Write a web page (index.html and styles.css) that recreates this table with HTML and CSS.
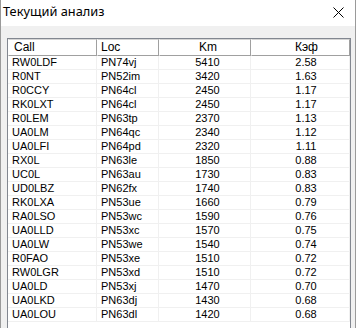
FILE: index.html
```html
<!DOCTYPE html>
<html>
<head>
<meta charset="utf-8">
<link rel="stylesheet" href="styles.css">
</head>
<body>
<div class="window">
  <div class="titlebar">
    <span class="title">Текущий анализ</span>
    <svg class="close" width="11" height="11" viewBox="0 0 11 11"><path d="M0.5 0.5 L10.5 10.5 M10.5 0.5 L0.5 10.5" stroke="#000" stroke-width="1" fill="none"/></svg>
  </div>
  <div class="content">
    <div class="listview">
      <div class="grid">
        <div class="hd c1">Call</div><div class="hd c2">Loc</div><div class="hd c3">Km</div><div class="hd c4">Кэф</div>
        <div class="c1">RW0LDF</div><div class="c2">PN74vj</div><div class="c3">5410</div><div class="c4">2.58</div>
        <div class="c1">R0NT</div><div class="c2">PN52im</div><div class="c3">3420</div><div class="c4">1.63</div>
        <div class="c1">R0CCY</div><div class="c2">PN64cl</div><div class="c3">2450</div><div class="c4">1.17</div>
        <div class="c1">RK0LXT</div><div class="c2">PN64cl</div><div class="c3">2450</div><div class="c4">1.17</div>
        <div class="c1">R0LEM</div><div class="c2">PN63tp</div><div class="c3">2370</div><div class="c4">1.13</div>
        <div class="c1">UA0LM</div><div class="c2">PN64qc</div><div class="c3">2340</div><div class="c4">1.12</div>
        <div class="c1">UA0LFI</div><div class="c2">PN64pd</div><div class="c3">2320</div><div class="c4">1.11</div>
        <div class="c1">RX0L</div><div class="c2">PN63le</div><div class="c3">1850</div><div class="c4">0.88</div>
        <div class="c1">UC0L</div><div class="c2">PN63au</div><div class="c3">1730</div><div class="c4">0.83</div>
        <div class="c1">UD0LBZ</div><div class="c2">PN62fx</div><div class="c3">1740</div><div class="c4">0.83</div>
        <div class="c1">RK0LXA</div><div class="c2">PN53ue</div><div class="c3">1660</div><div class="c4">0.79</div>
        <div class="c1">RA0LSO</div><div class="c2">PN53wc</div><div class="c3">1590</div><div class="c4">0.76</div>
        <div class="c1">UA0LLD</div><div class="c2">PN53xc</div><div class="c3">1570</div><div class="c4">0.75</div>
        <div class="c1">UA0LW</div><div class="c2">PN53we</div><div class="c3">1540</div><div class="c4">0.74</div>
        <div class="c1">R0FAO</div><div class="c2">PN53xe</div><div class="c3">1510</div><div class="c4">0.72</div>
        <div class="c1">RW0LGR</div><div class="c2">PN53xd</div><div class="c3">1510</div><div class="c4">0.72</div>
        <div class="c1">UA0LD</div><div class="c2">PN53xj</div><div class="c3">1470</div><div class="c4">0.70</div>
        <div class="c1">UA0LKD</div><div class="c2">PN63dj</div><div class="c3">1430</div><div class="c4">0.68</div>
        <div class="c1">UA0LOU</div><div class="c2">PN63dl</div><div class="c3">1420</div><div class="c4">0.68</div>
      </div>
    </div>
  </div>
</div>
</body>
</html>
```
FILE: styles.css
```css
html, body {
  margin: 0;
  padding: 0;
  background: #f0f0f0;
  overflow: hidden;
}
.window {
  width: 356px;
  height: 328px;
  box-sizing: border-box;
  border-left: 1px solid #9a9a9a;
  border-right: 1px solid #9a9a9a;
  background: #f0f0f0;
  overflow: hidden;
}
.titlebar {
  height: 26px;
  background: #fff;
  display: flex;
  align-items: center;
  justify-content: space-between;
  padding: 0 11px 0 2px;
  box-sizing: border-box;
}
.title {
  font-family: "Noto Sans", "Open Sans", sans-serif;
  font-size: 12.8px;
  color: #000;
  margin-top: -4px;
}
.close {
  margin-top: -1px;
}
.content {
  padding: 12px 3px 0 6px;
}
.listview {
  width: 344px;
  height: 300px;
  box-sizing: border-box;
  border: 1px solid #828790;
  background: #fff;
  overflow: hidden;
}
.grid {
  display: grid;
  grid-template-columns: 89px 62px 92px 99px;
  font-family: "Liberation Sans", Arial, sans-serif;
  font-size: 11px;
  color: #000;
}
.grid > div {
  height: 14px;
  line-height: 13px;
  box-sizing: border-box;
  border-bottom: 1px solid #f0f0f0;
  border-right: 1px solid #f0f0f0;
  white-space: nowrap;
}
.grid > .hd {
  height: 17px;
  line-height: 15px;
  border-top: 1px solid #d5d5d5;
  border-bottom: 1px solid #a0a0a0;
  border-right: 1px solid #a0a0a0;
  border-left: 1px solid #ffffff;
  background: #fff;
  font-size: 12px;
}
.c1 { padding-left: 4px; }
.c2 { padding-left: 4px; }
.c3 { text-align: center; padding-left: 6px; }
.c4 { text-align: center; padding-left: 12px; }
.hd.c1 { padding-left: 5px; }
.hd.c2 { padding-left: 3px; }
```
